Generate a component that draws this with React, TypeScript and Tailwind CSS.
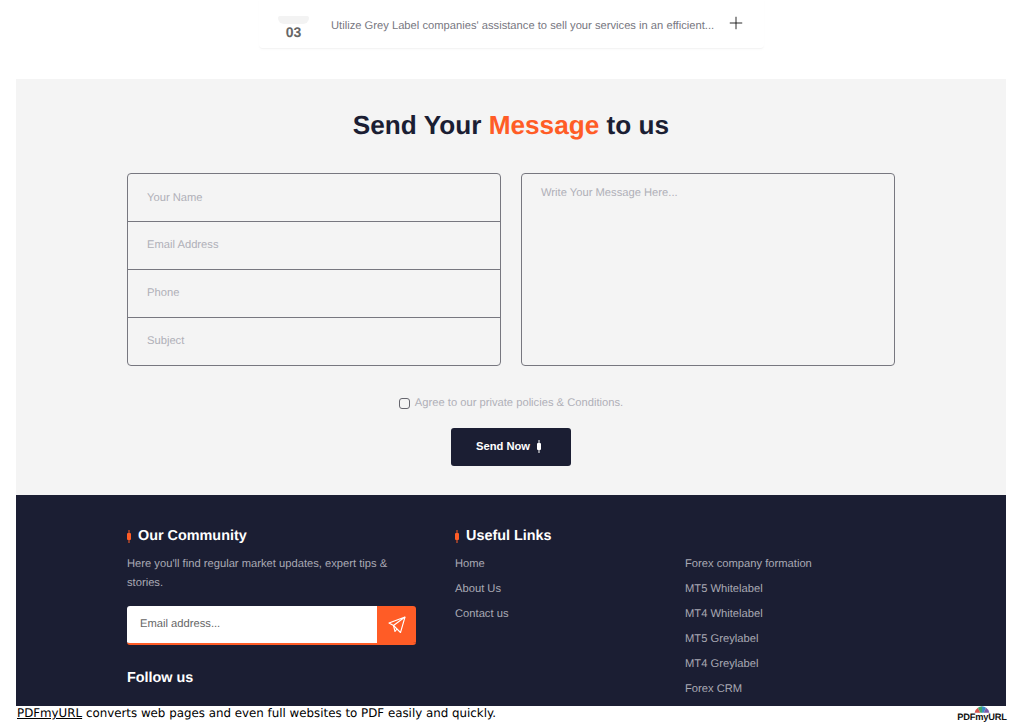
import React from 'react';
import { Plus } from 'lucide-react';

const linksLeft = ['Home', 'About Us', 'Contact us'];
const linksRight = ['Forex company formation', 'MT5 Whitelabel', 'MT4 Whitelabel', 'MT5 Greylabel', 'MT4 Greylabel', 'Forex CRM'];
const fields = ['Your Name', 'Email Address', 'Phone', 'Subject'];

// little candlestick used as a bullet
const Candle = ({ color, className }: { color: string; className?: string }) => (
  <svg width="4" height="13" viewBox="0 0 4 13" className={className}>
    <rect x="1.5" y="0" width="1" height="13" fill={color} />
    <rect x="0" y="3" width="4" height="7" rx="1" fill={color} />
  </svg>
);

const FooterHeading = ({ children }: { children: React.ReactNode }) => (
  <h4 className="flex items-center gap-[7px] text-[14.4px] leading-[20px] font-bold text-white">
    <Candle color="#ff5c26" />
    {children}
  </h4>
);

export default function App() {
  return (
    <div className="relative h-[723px] w-[1023px] overflow-hidden bg-white font-['Liberation_Sans',Arial,sans-serif] [text-rendering:geometricPrecision]">
      {/* Accordion row cut off at the top */}
      <div className="flex h-[79px] justify-center">
        <div className="flex h-[49px] w-[505px] items-start rounded-b-[4px] border-b border-[#f4f4f4] shadow-[0_1px_3px_rgba(0,0,0,0.02)]">
          <div className="ml-[19px] mt-[16px] w-[31px]">
            <div className="h-[8px] rounded-b-[6px] rounded-t-[2px] bg-[#f3f3f3]" />
            <div className="text-center text-[14px] leading-[16px] font-bold text-[#666666]">03</div>
          </div>
          <p className="ml-[22px] mt-[19px] w-[395px] text-[11.2px] leading-[14px] whitespace-nowrap text-[#77777f]">
            Utilize Grey Label companies' assistance to sell your services in an efficient...
          </p>
          <Plus className="mt-[13px] h-[20px] w-[20px] text-black" strokeWidth={1} />
        </div>
      </div>

      {/* Contact form */}
      <section className="mx-4 flex h-[416px] w-[990px] flex-col items-center bg-[#f4f4f4] pt-[30px]">
        <h2 className="text-[26.2px] leading-[32px] font-bold text-[#1b1e33]">
          Send Your <span className="text-[#ff5c26]">Message</span> to us
        </h2>
        <div className="mt-[32px] flex w-[768px] gap-5">
          <div className="h-[193px] w-[374px] overflow-hidden rounded-[4px] border border-[#77777f]">
            {fields.map((f, i) => (
              <div
                key={f}
                className={`flex items-center pl-[19px] text-[11.2px] text-[#b0b0b8] ${i > 0 ? 'h-[48px] border-t border-[#77777f]' : 'h-[47px] pt-[2px]'}`}
              >
                {f}
              </div>
            ))}
          </div>
          <div className="h-[193px] w-[374px] rounded-[4px] border border-[#77777f] pl-[19px] pt-[12px] text-[11.2px] leading-[14px] text-[#b0b0b8]">
            Write Your Message Here...
          </div>
        </div>
        <label className="mt-[30px] flex items-center gap-[5px] text-[11.2px] leading-[14px] text-[#b0b0b8]">
          <span className="h-[11px] w-[11px] rounded-[3px] border border-[#66666e]" />
          Agree to our private policies &amp; Conditions.
        </label>
        <button className="mt-[18px] flex h-[38px] w-[120px] items-center justify-center gap-[6px] rounded-[3px] bg-[#1b1e33] pb-[1px] pr-[5px] text-[11.2px] font-bold text-white">
          Send Now <Candle color="#ffffff" className="ml-[1px]" />
        </button>
      </section>

      {/* Footer */}
      <footer className="mx-4 flex h-[211px] w-[990px] overflow-hidden bg-[#1b1e33] pl-[111px] pt-[31px]">
        <div className="w-[289px]">
          <FooterHeading>Our Community</FooterHeading>
          <p className="mt-[9px] text-[11.2px] leading-[18.5px] text-[#a9a9b3]">
            Here you'll find regular market updates, expert tips &amp; stories.
          </p>
          <div className="mt-[14px] flex h-[39px] overflow-hidden rounded-[3px] border-b-2 border-[#ff5c26]">
            <div className="flex flex-1 items-center bg-white pl-[13px] text-[11.2px] text-[#666666]">Email address...</div>
            <div className="flex w-[39px] items-center justify-center bg-[#ff5c26]">
              <svg width="18" height="18" viewBox="0 0 18 18" fill="none" stroke="#ffffff" strokeWidth="1.1" strokeLinejoin="round">
                <path d="M17 1 1 7l4.5 2.5L17 1Z" />
                <path d="M17 1 12.5 16.5l-7-7" />
                <path d="M5.5 9.5 7 15.5 9 13" />
              </svg>
            </div>
          </div>
          <h4 className="mt-[23px] text-[14.4px] leading-[20px] font-bold text-white">Follow us</h4>
        </div>
        <div className="ml-[39px] w-[230px]">
          <FooterHeading>Useful Links</FooterHeading>
          <ul className="mt-[9px] text-[11.2px] text-[#a9a9b3]">
            {linksLeft.map((l) => (
              <li key={l} className="h-[25px] leading-[18px]">{l}</li>
            ))}
          </ul>
        </div>
        <ul className="mt-[29px] text-[11.2px] text-[#a9a9b3]">
          {linksRight.map((l) => (
            <li key={l} className="h-[25px] leading-[18px]">{l}</li>
          ))}
        </ul>
      </footer>

      {/* PDF converter strip */}
      <div className="flex h-[17px] items-start justify-between pl-[17px] pr-[16px] font-['DejaVu_Sans',Verdana,sans-serif] text-[11.85px] leading-[15px] text-black">
        <p>
          <span className="underline">PDFmyURL</span> converts web pages and even full websites to PDF easily and quickly.
        </p>
      </div>

      {/* PDFmyURL logo over the corner */}
      <div className="absolute bottom-[1px] right-[16px] flex w-[50px] flex-col items-center">
        <svg width="18" height="8" viewBox="0 0 22 9">
          <path d="M2 9a9 9 0 0 1 4-6l3 6Z" fill="#d9534f" />
          <path d="M6 3a9 9 0 0 1 5-2v8H9Z" fill="#3fa66a" />
          <path d="M11 1a9 9 0 0 1 5 2l-3 6h-2Z" fill="#3a8fc4" />
          <path d="M16 3a9 9 0 0 1 4 6h-7Z" fill="#7a5aa8" />
        </svg>
        <span className="text-[9.3px] leading-[9px] font-bold tracking-[-0.2px] text-[#111111]">PDFmyURL</span>
      </div>
    </div>
  );
}
